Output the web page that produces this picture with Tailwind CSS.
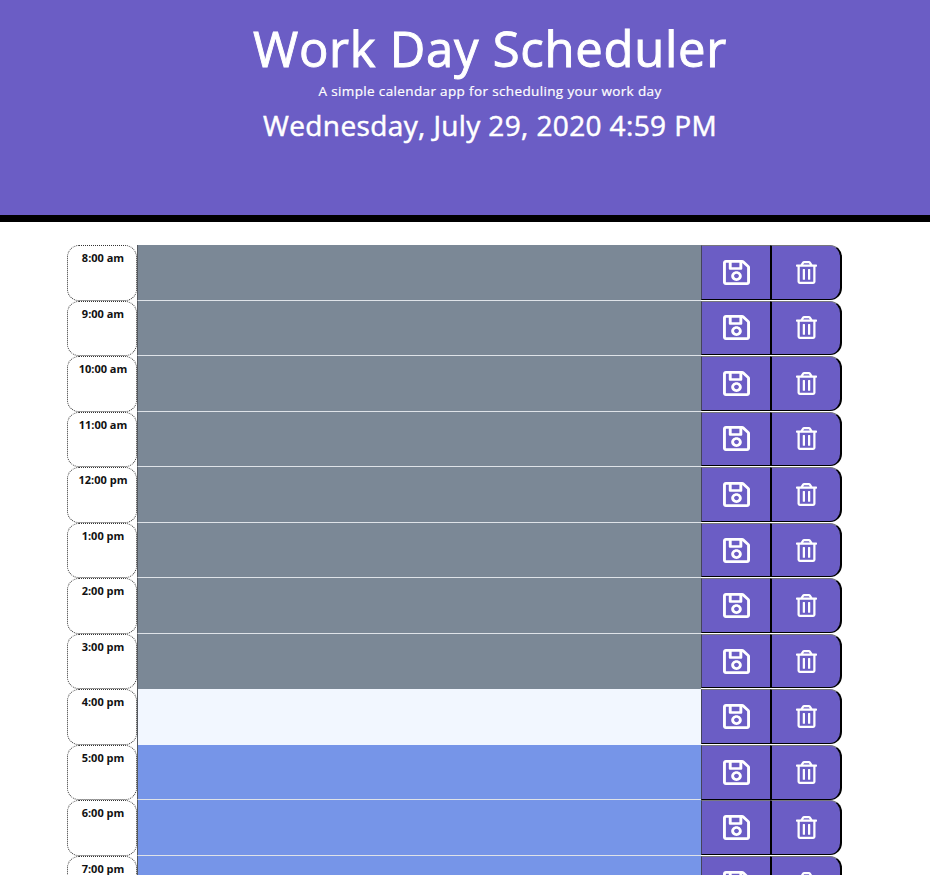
<!DOCTYPE html>
<html lang="en">
<head>
<meta charset="utf-8">
<title>Work Day Scheduler</title>
<script src="https://cdn.jsdelivr.net/npm/@tailwindcss/browser@4"></script>
</head>
<body class="h-[875px] overflow-hidden bg-white font-['Trebuchet_MS','Open_Sans',sans-serif]">
<svg class="hidden">
  <symbol id="save" viewBox="0 32 448 448" preserveAspectRatio="none"><path d="M433.941 129.941l-83.882-83.882A48 48 0 0 0 316.118 32H48C21.49 32 0 53.49 0 80v352c0 26.51 21.49 48 48 48h352c26.51 0 48-21.49 48-48V163.882a48 48 0 0 0-14.059-33.941zM272 80v80H144V80h128zm122 352H54a6 6 0 0 1-6-6V86a6 6 0 0 1 6-6h42v104c0 13.255 10.745 24 24 24h176c13.255 0 24-10.745 24-24V83.882l78.243 78.243a6 6 0 0 1 1.757 4.243V426a6 6 0 0 1-6 6zM224 232c-48.523 0-88 39.477-88 88s39.477 88 88 88 88-39.477 88-88-39.477-88-88-88zm0 128c-22.056 0-40-17.944-40-40s17.944-40 40-40 40 17.944 40 40-17.944 40-40 40z"/></symbol>
  <symbol id="trash" viewBox="0 0 448 512" preserveAspectRatio="none"><path d="M268 416h24a12 12 0 0 0 12-12V188a12 12 0 0 0-12-12h-24a12 12 0 0 0-12 12v216a12 12 0 0 0 12 12zM432 80h-82.41l-34-56.7A48 48 0 0 0 274.41 0H173.59a48 48 0 0 0-41.16 23.3L98.41 80H16A16 16 0 0 0 0 96v16a16 16 0 0 0 16 16h16v336a48 48 0 0 0 48 48h288a48 48 0 0 0 48-48V128h16a16 16 0 0 0 16-16V96a16 16 0 0 0-16-16zM171.84 50.91A6 6 0 0 1 177 48h94a6 6 0 0 1 5.15 2.91L293.61 80H154.39zM368 464H80V128h288zm-212-48h24a12 12 0 0 0 12-12V188a12 12 0 0 0-12-12h-24a12 12 0 0 0-12 12v216a12 12 0 0 0 12 12z"/></symbol>
</svg>
<header class="flex h-[222px] flex-col items-center whitespace-nowrap border-b-[7px] border-black bg-[#6b5dc5] pl-[50px] pt-[16px] text-white">
  <h1 class="h-[65px] text-[49px] leading-[64px] font-medium tracking-[0.72px] [-webkit-text-stroke:0.9px_white]">Work Day Scheduler</h1>
  <p class="h-[20px] text-[13.5px] leading-[20px] tracking-[0.36px] [-webkit-text-stroke:0.2px_white]">A simple calendar app for scheduling your work day</p>
  <p class="h-[48px] text-[28px] leading-[49px] font-medium tracking-[0.38px] [-webkit-text-stroke:0.5px_white]">Wednesday, July 29, 2020 4:59 PM</p>
</header>
<main id="rows" class="ml-[67px] mt-[23px] w-[775px]"></main>
<script>
const hours = ['8:00 am','9:00 am','10:00 am','11:00 am','12:00 pm','1:00 pm','2:00 pm','3:00 pm','4:00 pm','5:00 pm','6:00 pm','7:00 pm'];
document.getElementById('rows').innerHTML = hours.map((h, i) => {
  const fill = i < 8 ? 'bg-[#7b8896]' : i === 8 ? 'bg-[#f2f7ff]' : 'bg-[#7695e8]';
  const line = i === 7 || i === 8 ? '' : 'border-b border-b-[#dfe3e8]';
  return `<section class="flex h-[55.55px]">
    <div class="h-full w-[70px] shrink-0 rounded-[12px] border border-dotted border-[#333] pt-[3px] pl-[2px] text-center text-[11px] leading-[18px] font-bold text-[#111]">${h}</div>
    <div class="h-full w-[564px] shrink-0 border-l border-l-[#55595f] ${fill} ${line}"></div>
    <button class="flex h-[54.6px] w-[70px] shrink-0 items-center justify-center border-t border-r border-b border-l border-t-[#77777c] border-r-black border-b-black border-l-[#44445c] bg-[#6b5dc5] text-white" aria-label="Save"><svg class="h-[25px] w-[27px] fill-current"><use href="#save"/></svg></button>
    <button class="flex h-[54.6px] w-[71px] shrink-0 items-center justify-center rounded-r-[12px] border-t border-r-2 border-b border-l border-t-[#77777c] border-r-black border-b-black border-l-black bg-[#6b5dc5] text-white" aria-label="Delete"><svg class="ml-px h-[23px] w-[21px] fill-current"><use href="#trash"/></svg></button>
  </section>`;
}).join('');
</script>
</body>
</html>
